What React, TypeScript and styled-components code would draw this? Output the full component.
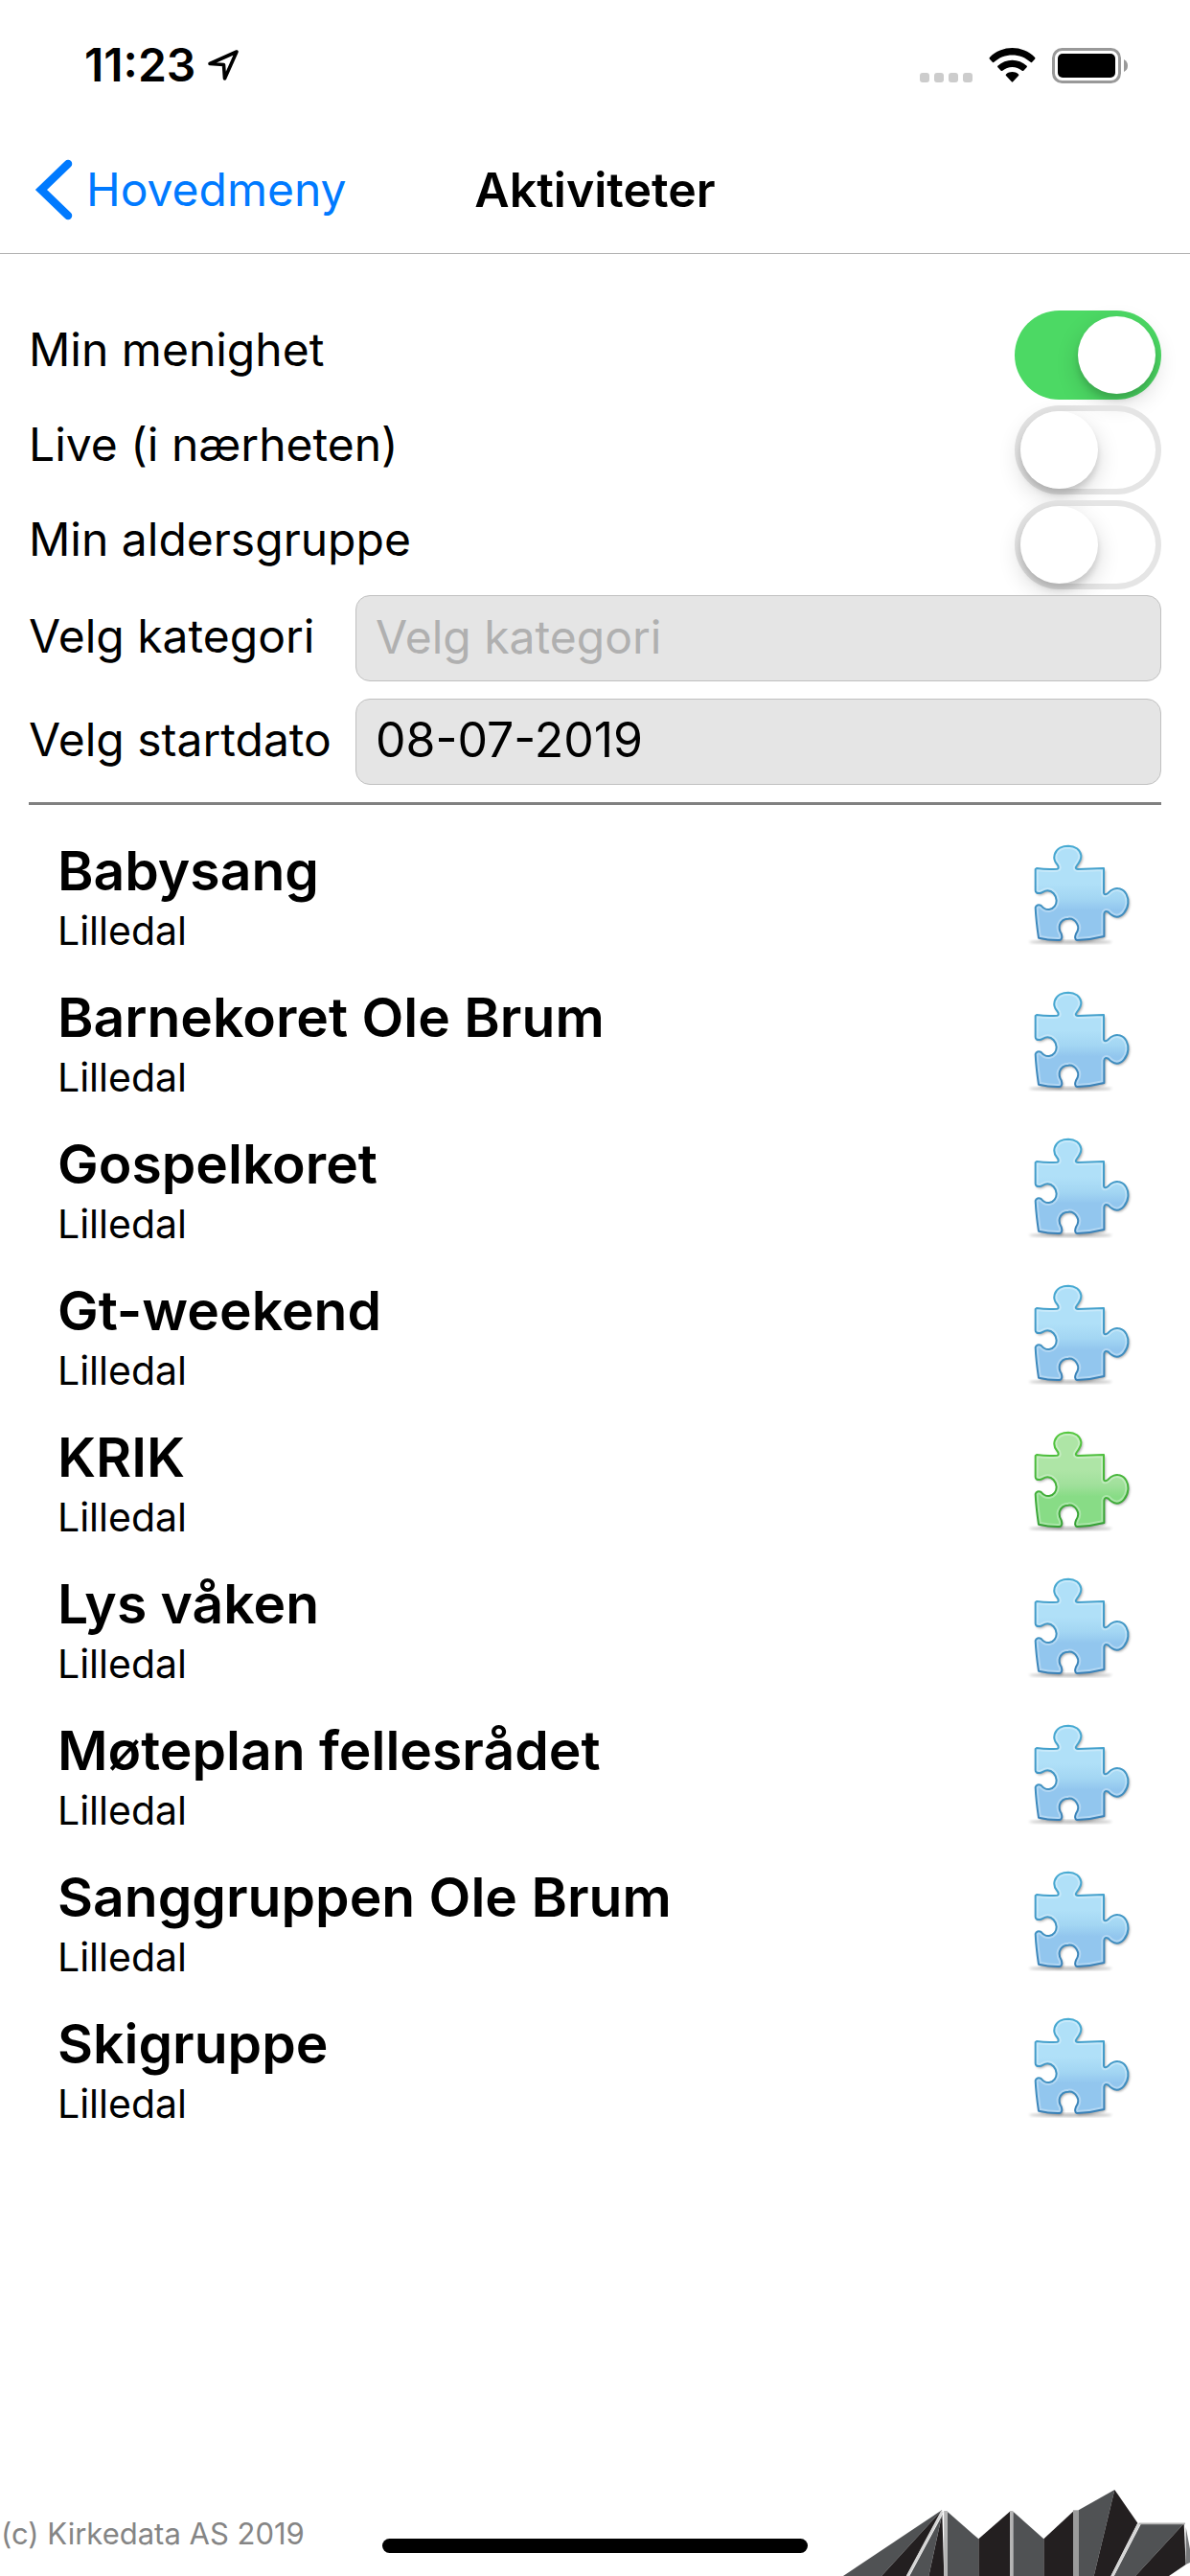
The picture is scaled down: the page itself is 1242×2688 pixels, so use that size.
import { useId, useState } from "react";
import styled, { createGlobalStyle } from "styled-components";

const GlobalStyle = createGlobalStyle`
  * {
    box-sizing: border-box;
  }

  body {
    margin: 0;
    background: #fff;
    color: #000;
    font-family: Inter, "Liberation Sans", sans-serif;
  }
`;

const Page = styled.div`
  display: flex;
  flex-direction: column;
  min-height: 100vh;
`;

const StatusBar = styled.div`
  display: flex;
  align-items: center;
  justify-content: space-between;
  height: 132px;
  padding: 4px 65px 0 88px;
`;

const StatusGroup = styled.div<{ $gap: number }>`
  display: flex;
  align-items: center;
  gap: ${({ $gap }) => $gap}px;
`;

const Time = styled.span`
  font-size: 48px;
  font-weight: 600;
  line-height: 60px;
`;

const NavBar = styled.header`
  display: grid;
  grid-template-columns: 1fr auto 1fr;
  align-items: center;
  height: 133px;
  padding: 0 36px;
  border-bottom: 1px solid #b2b2b2;
`;

const BackButton = styled.button`
  display: flex;
  align-items: center;
  justify-self: start;
  gap: 12px;
  padding: 0;
  border: 0;
  background: none;
  color: #007aff;
  font-family: inherit;
  font-size: 48px;
  line-height: 60px;
`;

const Title = styled.h1`
  margin: 0;
  font-size: 50px;
  font-weight: 600;
  line-height: 60px;
`;

const Filters = styled.form`
  display: flex;
  flex-direction: column;
  gap: 18px;
  margin: 0 30px;
  padding: 59px 0 18px;
  border-bottom: 3px solid #808080;
`;

const Switches = styled.div`
  display: flex;
  flex-direction: column;
  gap: 6px;
  margin-bottom: -12px;
`;

const SwitchRow = styled.div`
  display: flex;
  align-items: center;
  justify-content: space-between;
`;

const FieldRow = styled.div`
  display: grid;
  grid-template-columns: 341px 1fr;
  align-items: center;
`;

const Label = styled.label<{ $raised?: boolean }>`
  padding-bottom: ${({ $raised }) => ($raised ? 12 : 4)}px;
  font-size: 48px;
  line-height: 60px;
  white-space: nowrap;
`;

const Switch = styled.input`
  display: flex;
  align-items: center;
  appearance: none;
  width: 153px;
  height: 93px;
  margin: 0;
  padding: 0 6px;
  border-radius: 47px;
  box-shadow: inset 0 0 0 6px #e5e5e5;

  &::before {
    content: "";
    width: 81px;
    height: 81px;
    border-radius: 50%;
    background: #fff;
    box-shadow: 0 9px 24px rgba(0, 0, 0, 0.16), 0 6px 6px rgba(0, 0, 0, 0.12);
  }

  &:checked {
    justify-content: flex-end;
    background: #4cd964;
    box-shadow: none;
  }
`;

const Field = styled.input`
  width: 100%;
  height: 90px;
  padding: 0 20px 4px;
  border: 1px solid #c0c0c0;
  border-radius: 15px;
  background: #e5e5e5;
  color: #000;
  font-family: inherit;
  font-size: 50px;

  &::placeholder {
    color: #b0b0b0;
    font-size: 48px;
    opacity: 1;
  }
`;

const ActivityList = styled.ul`
  flex: 1;
  margin: 0;
  padding: 16px 58px 18px 60px;
  list-style: none;
`;

const Activity = styled.li`
  display: flex;
  align-items: center;
  justify-content: space-between;
  height: 153px;
`;

const ActivityName = styled.h2`
  margin: 0;
  font-size: 57px;
  font-weight: 600;
  line-height: 76px;
`;

const ActivityPlace = styled.p`
  margin: 0;
  font-size: 41px;
  line-height: 48px;
`;

const Footer = styled.footer`
  position: relative;
  display: flex;
  align-items: flex-end;
  justify-content: space-between;
`;

const Copyright = styled.small`
  padding: 0 0 24px 1px;
  color: #858585;
  font-size: 31px;
  line-height: 40px;
`;

const HomeIndicator = styled.div`
  position: absolute;
  bottom: 24px;
  left: 50%;
  width: 444px;
  height: 15px;
  border-radius: 8px;
  background: #000;
  transform: translateX(-50%);
`;

const LocationIcon = () => (
  <svg width="34" height="34" viewBox="0 0 34 34" aria-hidden="true">
    <path
      d="M31 3 L3 15.500 L17.500 16.500 L18.500 31 Z"
      fill="none"
      stroke="#000"
      strokeWidth="3.600"
      strokeLinejoin="round"
    />
  </svg>
);

const SignalIcon = () => (
  <svg width="55" height="36" viewBox="0 0 55 36" fill="#ccc" aria-hidden="true">
    {[0, 15, 30, 45].map((x) => (
      <rect key={x} x={x} y="26" width="10" height="10" rx="3" />
    ))}
  </svg>
);

const WifiIcon = () => (
  <svg width="49" height="36" viewBox="0 0 49 36" aria-hidden="true">
    <path d="M.8 10 C14 -3.200 35 -3.200 48.200 10 Q48.800 11 48 11.800 L45 15 Q44.300 15.500 43.500 14.800 C33 5 16 5 5.500 14.800 Q4.700 15.500 4 15 L1 11.800 Q.2 11 .8 10 Z" />
    <path d="M9.300 18.800 C17.700 10.600 31.300 10.600 39.700 18.800 Q40.300 19.600 39.600 20.300 L36.300 23.700 Q35.500 24.400 34.700 23.700 C29 18.600 20 18.600 14.300 23.700 Q13.500 24.400 12.700 23.700 L9.400 20.300 Q8.700 19.600 9.300 18.800 Z" />
    <path d="M18 27.400 C21.700 24.200 27.300 24.200 31 27.400 Q31.800 28.200 31 29 L25.200 35.300 Q24.500 36 23.800 35.300 L18 29 Q17.200 28.200 18 27.400 Z" />
  </svg>
);

const BatteryIcon = () => (
  <svg width="79" height="37" viewBox="0 0 79 37" aria-hidden="true">
    <rect x="1.500" y="1.500" width="69" height="34" rx="9" fill="none" stroke="#999" strokeWidth="3" />
    <rect x="6" y="6" width="60" height="25" rx="5" />
    <path d="M75 12 Q79 14 79 18.500 Q79 23 75 25 Z" fill="#999" />
  </svg>
);

const BackIcon = () => (
  <svg width="42" height="66" viewBox="0 0 42 66" aria-hidden="true">
    <path
      d="M35 6 L7 33 L35 60"
      fill="none"
      stroke="currentColor"
      strokeWidth="8.500"
      strokeLinecap="round"
    />
  </svg>
);

const puzzlePath =
  "M96 135 Q130 140 160 137 C165 136 166 130 160 123 C150 112 150 100 152 92 " +
  "C158 72 178 65 195 65 C215 66 232 76 235 95 C236 107 230 116 222 126 C216 134 218 137 225 138 " +
  "Q265 137 306 135 L306 212 C308 220 314 217 320 212 C330 200 345 196 355 199 " +
  "C375 204 384 225 382 245 C380 268 362 287 347 287 C333 286 325 278 320 272 C313 268 308 270 307 278 " +
  "L307 348 Q265 359 222 360 C215 358 215 350 219 340 C226 330 228 318 222 308 " +
  "C215 296 203 292 195 293 C183 293 172 300 168 312 C164 325 168 332 173 340 " +
  "C176 350 176 358 168 360 Q135 361 102 353 Q94 300 92 258 C94 250 102 248 110 252 " +
  "C116 260 125 265 135 264 C150 262 158 248 158 236 C157 218 144 205 130 205 " +
  "C118 205 114 212 105 213 C96 214 92 210 92 204 L92 138 Z";

const puzzleColors = {
  blue: { light: "#b0e0f8", middle: "#a3d6f3", dark: "#92c6ee", edgeTop: "#48abd3", edgeBottom: "#3b82b8" },
  green: { light: "#aee5a6", middle: "#a0e09b", dark: "#88dc86", edgeTop: "#55c83f", edgeBottom: "#36a136" },
};

type PuzzleColor = keyof typeof puzzleColors;

const PuzzleIcon = ({ color }: { color: PuzzleColor }) => {
  const id = useId();
  const c = puzzleColors[color];

  return (
    <svg width="114" height="112" viewBox="60 48 342 336" aria-hidden="true">
      <defs>
        <linearGradient id={`${id}fill`} x1="0" y1="0" x2="0" y2="1">
          <stop offset="0" stopColor={c.light} />
          <stop offset="0.4" stopColor={c.light} />
          <stop offset="0.56" stopColor={c.middle} />
          <stop offset="0.68" stopColor={c.dark} />
          <stop offset="1" stopColor={c.dark} />
        </linearGradient>
        <linearGradient id={`${id}edge`} x1="0" y1="0" x2="0" y2="1">
          <stop offset="0" stopColor={c.edgeTop} />
          <stop offset="1" stopColor={c.edgeBottom} />
        </linearGradient>
        <clipPath id={`${id}clip`}>
          <path d={puzzlePath} />
        </clipPath>
        <filter id={`${id}blur`} x="-20%" y="-20%" width="140%" height="140%">
          <feGaussianBlur stdDeviation="4" />
        </filter>
      </defs>
      <ellipse cx="202" cy="366" rx="130" ry="5" fill="#000" opacity="0.28" filter={`url(#${id}blur)`} />
      <path d={puzzlePath} transform="translate(4 5)" fill="#000" opacity="0.4" filter={`url(#${id}blur)`} />
      <path d={puzzlePath} fill={`url(#${id}fill)`} />
      <g clipPath={`url(#${id}clip)`}>
        <path d={puzzlePath} fill="none" stroke="#fff" strokeOpacity="0.3" strokeWidth="18" />
      </g>
      <path d={puzzlePath} fill="none" stroke={`url(#${id}edge)`} strokeWidth="6" strokeLinejoin="round" />
    </svg>
  );
};

const LogoArt = () => (
  <svg width="382" height="90" viewBox="0 54 1146 270" aria-hidden="true">
    <g fill="#505254">
      <path d="M60 324 L370 117 L180 324 Z" />
      <path d="M268 324 L368 138 L328 324 Z" />
      <path d="M386 122 L484 208 V324 H386 Z" />
      <path d="M592 122 L688 208 V324 H592 Z" />
      <path d="M797 118 L910 54 L845 324 H797 Z" />
      <path d="M992 162 L1127 160 L975 324 H908 Z" />
    </g>
    <g fill="#231f20">
      <path d="M180 324 L370 117 L258 324 Z" />
      <path d="M328 324 L370 130 L376 324 Z" />
      <path d="M484 208 L582 122 V324 H484 Z" />
      <path d="M688 208 L780 122 V324 H688 Z" />
      <path d="M910 54 L982 158 L898 324 H845 Z" />
      <path d="M1127 160 L1133 288 L1080 324 H975 Z" />
    </g>
    <path d="M1133 170 L1146 240 V282 L1133 288 Z" fill="#77787a" />
    <g fill="none" stroke="#b5b5b5">
      <path d="M370 122 L262 324" strokeWidth="8" stroke="#d5d5d5" />
      <path d="M381 120 V324" strokeWidth="11" />
      <path d="M587 120 V324" strokeWidth="10" />
      <path d="M789 118 V324" strokeWidth="18" stroke="#9b9b9b" />
      <path d="M986 160 L903 324" strokeWidth="9" stroke="#d5d5d5" />
      <path d="M986 160 H1131" strokeWidth="5" />
    </g>
  </svg>
);

const activities: { name: string; place: string; color: PuzzleColor }[] = [
  { name: "Babysang", place: "Lilledal", color: "blue" },
  { name: "Barnekoret Ole Brum", place: "Lilledal", color: "blue" },
  { name: "Gospelkoret", place: "Lilledal", color: "blue" },
  { name: "Gt-weekend", place: "Lilledal", color: "blue" },
  { name: "KRIK", place: "Lilledal", color: "green" },
  { name: "Lys våken", place: "Lilledal", color: "blue" },
  { name: "Møteplan fellesrådet", place: "Lilledal", color: "blue" },
  { name: "Sanggruppen Ole Brum", place: "Lilledal", color: "blue" },
  { name: "Skigruppe", place: "Lilledal", color: "blue" },
];

const switches = [
  { id: "menighet", label: "Min menighet" },
  { id: "live", label: "Live (i nærheten)" },
  { id: "aldersgruppe", label: "Min aldersgruppe" },
];

function App() {
  const [active, setActive] = useState<Record<string, boolean>>({ menighet: true });
  const [category, setCategory] = useState("");
  const [startDate, setStartDate] = useState("08-07-2019");

  return (
    <Page>
      <GlobalStyle />
      <StatusBar>
        <StatusGroup $gap={12}>
          <Time>11:23</Time>
          <LocationIcon />
        </StatusGroup>
        <StatusGroup $gap={17}>
          <SignalIcon />
          <WifiIcon />
          <BatteryIcon />
        </StatusGroup>
      </StatusBar>
      <NavBar>
        <BackButton type="button">
          <BackIcon />
          Hovedmeny
        </BackButton>
        <Title>Aktiviteter</Title>
      </NavBar>
      <Filters>
        <Switches>
          {switches.map(({ id, label }) => (
            <SwitchRow key={id}>
              <Label htmlFor={id} $raised>
                {label}
              </Label>
              <Switch
                id={id}
                type="checkbox"
                checked={!!active[id]}
                onChange={(e) => setActive({ ...active, [id]: e.target.checked })}
              />
            </SwitchRow>
          ))}
        </Switches>
        <FieldRow>
          <Label htmlFor="kategori">Velg kategori</Label>
          <Field
            id="kategori"
            type="text"
            placeholder="Velg kategori"
            value={category}
            onChange={(e) => setCategory(e.target.value)}
          />
        </FieldRow>
        <FieldRow>
          <Label htmlFor="startdato">Velg startdato</Label>
          <Field
            id="startdato"
            type="text"
            value={startDate}
            onChange={(e) => setStartDate(e.target.value)}
          />
        </FieldRow>
      </Filters>
      <ActivityList>
        {activities.map(({ name, place, color }) => (
          <Activity key={name}>
            <div>
              <ActivityName>{name}</ActivityName>
              <ActivityPlace>{place}</ActivityPlace>
            </div>
            <PuzzleIcon color={color} />
          </Activity>
        ))}
      </ActivityList>
      <Footer>
        <Copyright>(c) Kirkedata AS 2019</Copyright>
        <LogoArt />
        <HomeIndicator />
      </Footer>
    </Page>
  );
}

export default App;
